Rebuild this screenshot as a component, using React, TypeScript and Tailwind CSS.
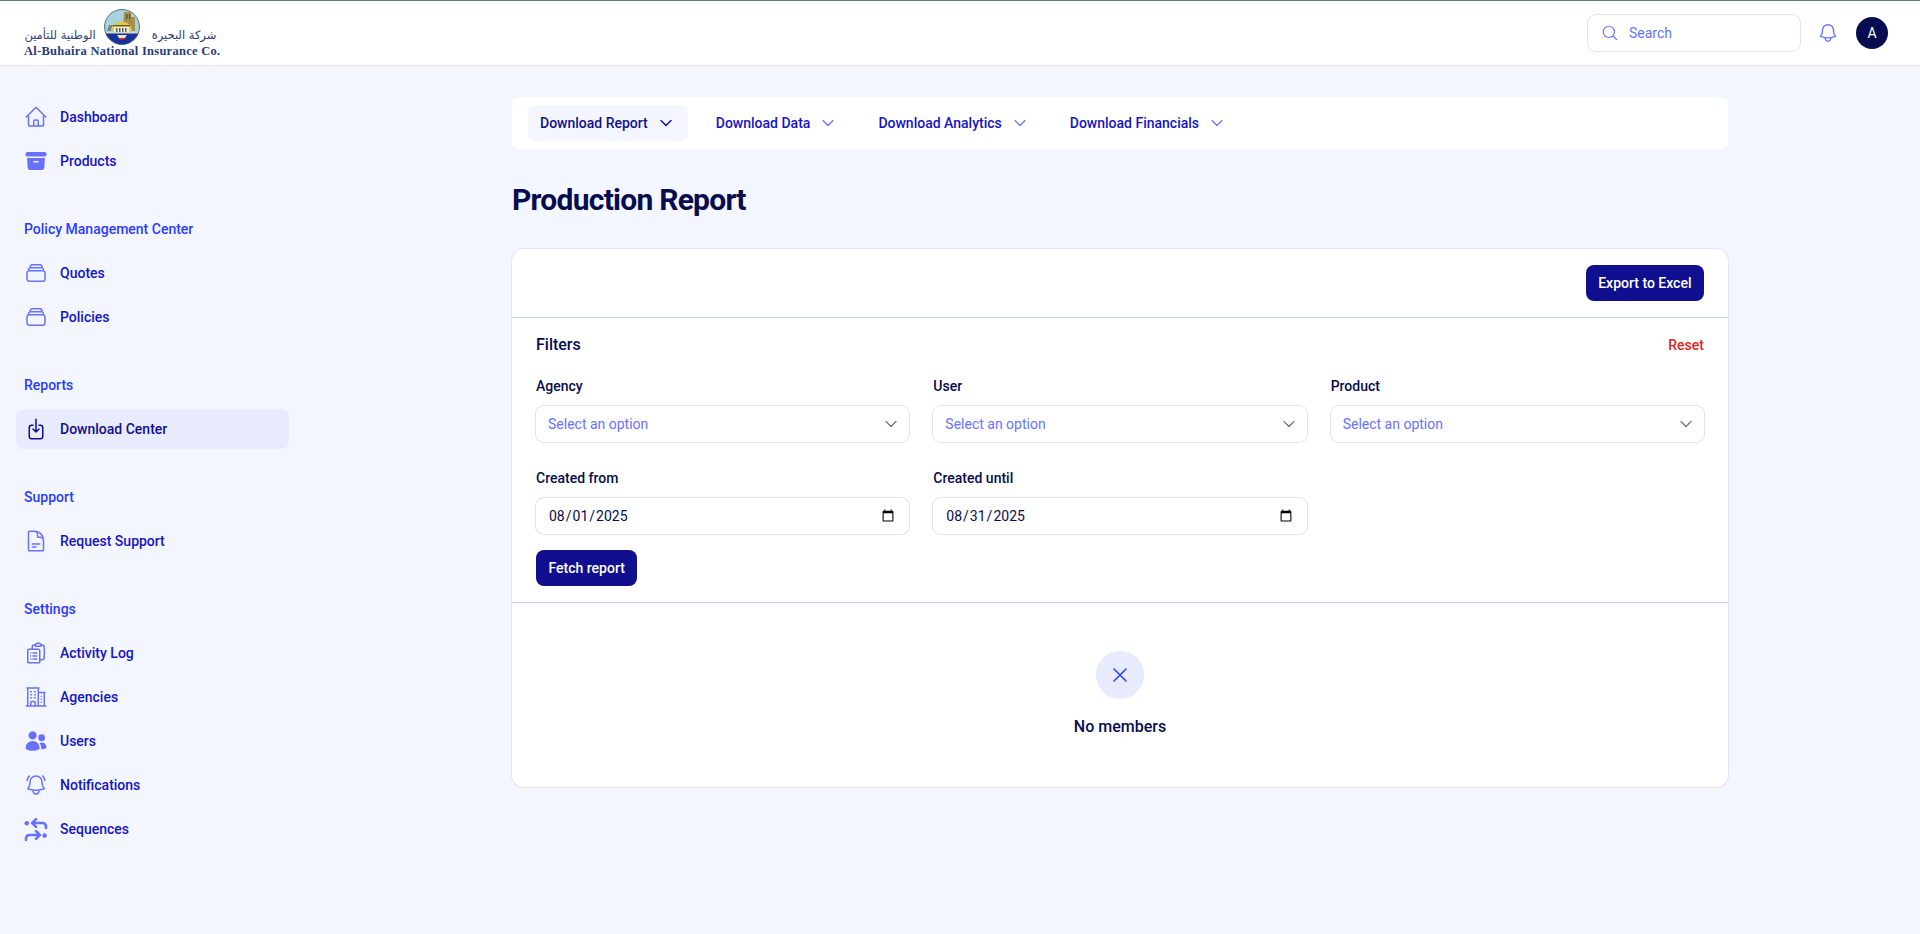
import type { ReactNode } from 'react'
import {
  HiArchiveBox,
  HiOutlineArrowDownOnSquare,
  HiOutlineBell,
  HiOutlineBellAlert,
  HiOutlineBuildingOffice2,
  HiOutlineChevronDown,
  HiOutlineClipboardDocumentList,
  HiOutlineDocumentText,
  HiOutlineHome,
  HiOutlineMagnifyingGlass,
  HiOutlineRectangleStack,
  HiOutlineXMark,
  HiUsers,
} from 'react-icons/hi2'

function SequencesIcon({ className }: { className?: string }) {
  return (
    <svg viewBox="0 0 24 24" className={className} fill="none" stroke="currentColor" strokeWidth="2.6" strokeLinecap="round" strokeLinejoin="round">
      <circle cx="2.8" cy="6.3" r="2.3" fill="currentColor" stroke="none" />
      <circle cx="20.6" cy="18.6" r="2.3" fill="currentColor" stroke="none" />
      <path d="M22 11V9.5A3.5 3.5 0 0 0 18.5 6H8.5" />
      <path d="M12 2.2 8.2 6l3.8 3.8" />
      <path d="M2 23v-1.5A3.5 3.5 0 0 1 5.5 18H15.5" />
      <path d="M12 14.2 15.8 18 12 21.8" />
    </svg>
  )
}

const GROUPS = [
  {
    label: '',
    items: [
      { label: 'Dashboard', icon: HiOutlineHome },
      { label: 'Products', icon: HiArchiveBox },
    ],
  },
  {
    label: 'Policy Management Center',
    items: [
      { label: 'Quotes', icon: HiOutlineRectangleStack },
      { label: 'Policies', icon: HiOutlineRectangleStack },
    ],
  },
  {
    label: 'Reports',
    items: [{ label: 'Download Center', icon: HiOutlineArrowDownOnSquare, active: true }],
  },
  {
    label: 'Support',
    items: [{ label: 'Request Support', icon: HiOutlineDocumentText }],
  },
  {
    label: 'Settings',
    items: [
      { label: 'Activity Log', icon: HiOutlineClipboardDocumentList },
      { label: 'Agencies', icon: HiOutlineBuildingOffice2 },
      { label: 'Users', icon: HiUsers },
      { label: 'Notifications', icon: HiOutlineBellAlert },
      { label: 'Sequences', icon: SequencesIcon },
    ],
  },
]

const TABS = ['Download Report', 'Download Data', 'Download Analytics', 'Download Financials']

function Logo() {
  return (
    <div className="flex w-[196px] flex-col font-['Liberation_Serif',serif] text-[#2a3a7c]">
      <div className="flex h-[35px] items-end justify-between">
        <span className="w-[72px] whitespace-nowrap pb-[2px] text-center font-['DejaVu_Sans',sans-serif] text-[11.5px] leading-[16px]" dir="rtl">
          الوطنية للتأمين
        </span>
        <svg viewBox="0 0 36 36" className="h-[36px] w-[36px] shrink-0">
          <clipPath id="emblem">
            <circle cx="18" cy="18" r="17.5" />
          </clipPath>
          <g clipPath="url(#emblem)">
            <rect width="36" height="36" fill="#a8d3de" />
            <path d="M20 3h7v5h4v14H19z" fill="#a88f4c" />
            <path d="M22 5h1.500v5H22zM25 5h1.500v5H25z" fill="#5b5a3c" />
            <path d="M3 22l2-6h6l-2 6z" fill="#6f8c7a" />
            <path d="M7 22c0-6 5-9.500 10.500-9.500S28 16 28 22z" fill="#e6c544" />
            <path d="M9 16h17v1.200H9z" fill="#57603f" />
            <path d="M10 23v-5h15v5z" fill="#f1efe2" />
            <path d="M12 19h1.500v4H12zM15 19h1.500v4H15zM18 19h1.500v4H18zM21 19h1.500v4H21z" fill="#5a5a58" />
            <path d="M0 24h36v12H0z" fill="#16339b" />
            <path d="M0 23h36v1.500H0z" fill="#d8d7c4" />
            <path d="M13 26h10l-2.500 3.500h-5z" fill="#efe3cf" />
            <path d="M15 29h6v1.500h-6z" fill="#d2342c" />
          </g>
          <circle cx="18" cy="18" r="17.500" fill="none" stroke="#39566b" strokeWidth="0.8" />
        </svg>
        <span className="w-[72px] whitespace-nowrap pb-[2px] text-center font-['DejaVu_Sans',sans-serif] text-[11.5px] leading-[16px]" dir="rtl">
          شركة البحيرة
        </span>
      </div>
      <span className="whitespace-nowrap text-[12.5px] font-bold leading-[12px] tracking-[0.27px]">
        Al-Buhaira National Insurance Co.
      </span>
    </div>
  )
}

function Field({ label, children }: { label: string; children: ReactNode }) {
  return (
    <div>
      <div className="mb-[10px] text-sm leading-5 font-medium text-[#060c4f]">{label}</div>
      {children}
    </div>
  )
}

function SelectBox() {
  return (
    <div className="flex h-9 items-center justify-between rounded-lg bg-white pr-[10px] pl-3 text-sm text-[#6672ff] ring-1 ring-[#e0e2ee]">
      <span>Select an option</span>
      <HiOutlineChevronDown className="h-4 w-4 text-[#6b7280]" style={{ strokeWidth: 1.8 }} />
    </div>
  )
}

function DateBox({ value }: { value: string }) {
  return (
    <input
      type="date"
      defaultValue={value}
      className="block h-9 w-full rounded-lg bg-white px-3 text-sm text-[#060c4f] ring-1 ring-[#e0e2ee]"
    />
  )
}

export default function App() {
  return (
    <div className="min-h-[934px] bg-[#f4f6ff] font-['Roboto',sans-serif]">
      <header className="flex h-[66px] items-center justify-between border-t border-b border-t-[#5f767c] border-b-[#e3e5f2] bg-white pr-8 pl-6">
        <Logo />
        <div className="flex items-center">
          <div className="flex h-9 w-[212px] items-center gap-[10px] rounded-lg bg-white pl-[13px] text-sm text-[#6672ff] ring-1 ring-[#e0e2ee]">
            <HiOutlineMagnifyingGlass className="h-[18px] w-[18px]" />
            Search
          </div>
          <HiOutlineBell className="ml-[17px] h-[22px] w-[22px] text-[#6672ff]" />
          <div className="ml-[17px] flex h-8 w-8 items-center justify-center rounded-full bg-[#060c4f] text-sm text-white">A</div>
        </div>
      </header>

      <div className="flex">
        <aside className="w-80 shrink-0 pt-[31px] pr-[31px] pl-4">
          {GROUPS.map(group => (
            <div key={group.label} className="mb-7 flex flex-col gap-1">
              {group.label && (
                <div className="flex h-10 items-center pl-2 text-sm font-medium text-[#2a3cff]">{group.label}</div>
              )}
              {group.items.map(item => {
                const Icon = item.icon
                const active = 'active' in item
                return (
                  <div
                    key={item.label}
                    className={`flex h-10 items-center gap-3 rounded-lg px-2 text-sm font-medium ${
                      active ? 'bg-[#e8eafd] text-[#10108f]' : 'text-[#1515c4]'
                    }`}
                  >
                    <Icon className={`h-6 w-6 shrink-0 ${active ? 'text-[#10108f]' : 'text-[#6672ff]'}`} />
                    {item.label}
                  </div>
                )
              })}
            </div>
          ))}
        </aside>

        <main className="flex-1 pt-[31px]">
          <div className="mx-auto max-w-7xl px-8">
            <nav className="flex h-[52px] items-center gap-4 rounded-lg bg-white px-4">
              {TABS.map((tab, i) => (
                <div
                  key={tab}
                  className={`flex h-9 items-center gap-2 rounded-lg px-3 text-sm font-medium ${
                    i === 0 ? 'bg-[#f4f6ff] text-[#10108f]' : 'text-[#1515c4]'
                  }`}
                >
                  {tab}
                  <HiOutlineChevronDown
                    className={`mx-[2px] h-4 w-4 ${i === 0 ? 'text-[#10108f]' : 'text-[#6672ff]'}`}
                    style={{ strokeWidth: i === 0 ? 2.2 : 1.8 }}
                  />
                </div>
              ))}
            </nav>

            <h1 className="mt-[33px] mb-[31px] text-3xl leading-9 font-bold tracking-tight text-[#060c4f]">Production Report</h1>

            <section className="rounded-xl bg-white ring-1 ring-[#e0e4f6]">
              <div className="flex justify-end border-b border-[#c5cdfb] px-6 py-4">
                <button className="h-9 rounded-lg bg-[#100f8f] px-[12.5px] text-sm font-medium text-white">Export to Excel</button>
              </div>

              <div className="border-b border-[#c5cdfb] px-6 pt-[15px] pb-4">
                <div className="mb-[19px] flex items-center justify-between">
                  <h2 className="text-base leading-6 font-medium text-[#060c4f]">Filters</h2>
                  <button className="text-sm font-medium text-[#e02424]">Reset</button>
                </div>
                <div className="grid grid-cols-3 gap-x-6 gap-y-[26px]">
                  <Field label="Agency"><SelectBox /></Field>
                  <Field label="User"><SelectBox /></Field>
                  <Field label="Product"><SelectBox /></Field>
                  <Field label="Created from"><DateBox value="2025-08-01" /></Field>
                  <Field label="Created until"><DateBox value="2025-08-31" /></Field>
                </div>
                <button className="mt-4 h-9 rounded-lg bg-[#100f8f] px-[12.5px] text-sm font-medium text-white">Fetch report</button>
              </div>

              <div className="flex flex-col items-center pt-12 pb-12">
                <div className="flex h-12 w-12 items-center justify-center rounded-full bg-[#e8eafd]">
                  <HiOutlineXMark className="h-6 w-6 text-[#2a3cff]" />
                </div>
                <div className="mt-4 text-base leading-6 font-medium text-[#060c4f]">No members</div>
              </div>
            </section>
          </div>
        </main>
      </div>
    </div>
  )
}
